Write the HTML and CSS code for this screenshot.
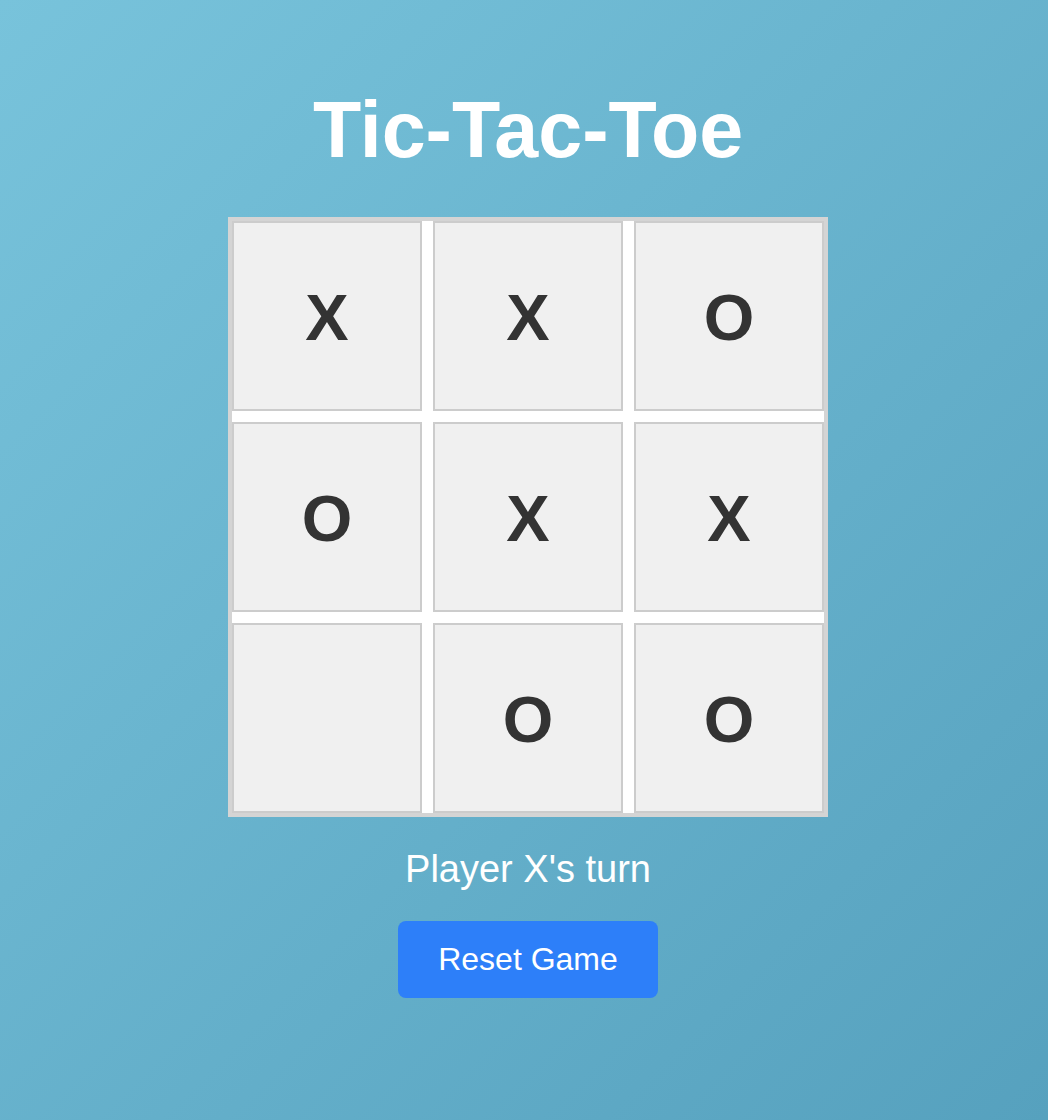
FILE: index.html
```html
<!DOCTYPE html>
<html lang="en">
<head>
<meta charset="utf-8">
<title>Tic-Tac-Toe</title>
<link rel="stylesheet" href="styles.css">
</head>
<body>
<main class="game">
  <h1 class="title">Tic-Tac-Toe</h1>
  <div class="board">
    <div class="cell">X</div>
    <div class="cell">X</div>
    <div class="cell">O</div>
    <div class="cell">O</div>
    <div class="cell">X</div>
    <div class="cell">X</div>
    <div class="cell"></div>
    <div class="cell">O</div>
    <div class="cell">O</div>
  </div>
  <p class="status">Player X's turn</p>
  <button class="reset">Reset Game</button>
</main>
</body>
</html>
```
FILE: styles.css
```css
html, body {
  margin: 0;
  padding: 0;
  height: 100%;
}
body {
  background: linear-gradient(135deg, #78c3db 0%, #56a1be 100%);
  font-family: "Liberation Sans", Arial, Helvetica, sans-serif;
  color: #fff;
}
.game {
  display: flex;
  flex-direction: column;
  align-items: center;
  padding-top: 84px;
  padding-left: 8px;
}
.title {
  margin: 0;
  font-size: 79px;
  font-weight: bold;
  line-height: 91px;
  color: #fff;
}
.board {
  margin-top: 42px;
  box-sizing: border-box;
  width: 600px;
  height: 600px;
  border: 4px solid #d4d4d4;
  background: #fff;
  display: grid;
  grid-template-columns: repeat(3, 1fr);
  grid-template-rows: repeat(3, 1fr);
  gap: 11px;
}
.cell {
  box-sizing: border-box;
  background: #f0f0f0;
  border: 2px solid #cccccc;
  display: flex;
  align-items: center;
  justify-content: center;
  padding-top: 3px;
  font-size: 65px;
  font-weight: bold;
  color: #333;
}
.status {
  margin: 30px 0 0;
  font-size: 38px;
  line-height: 44px;
}
.reset {
  margin-top: 30px;
  padding: 20px 40px;
  font-family: "Liberation Sans", Arial, Helvetica, sans-serif;
  font-size: 32px;
  color: #fff;
  background: #2d7ff9;
  border: none;
  border-radius: 8px;
}
```
